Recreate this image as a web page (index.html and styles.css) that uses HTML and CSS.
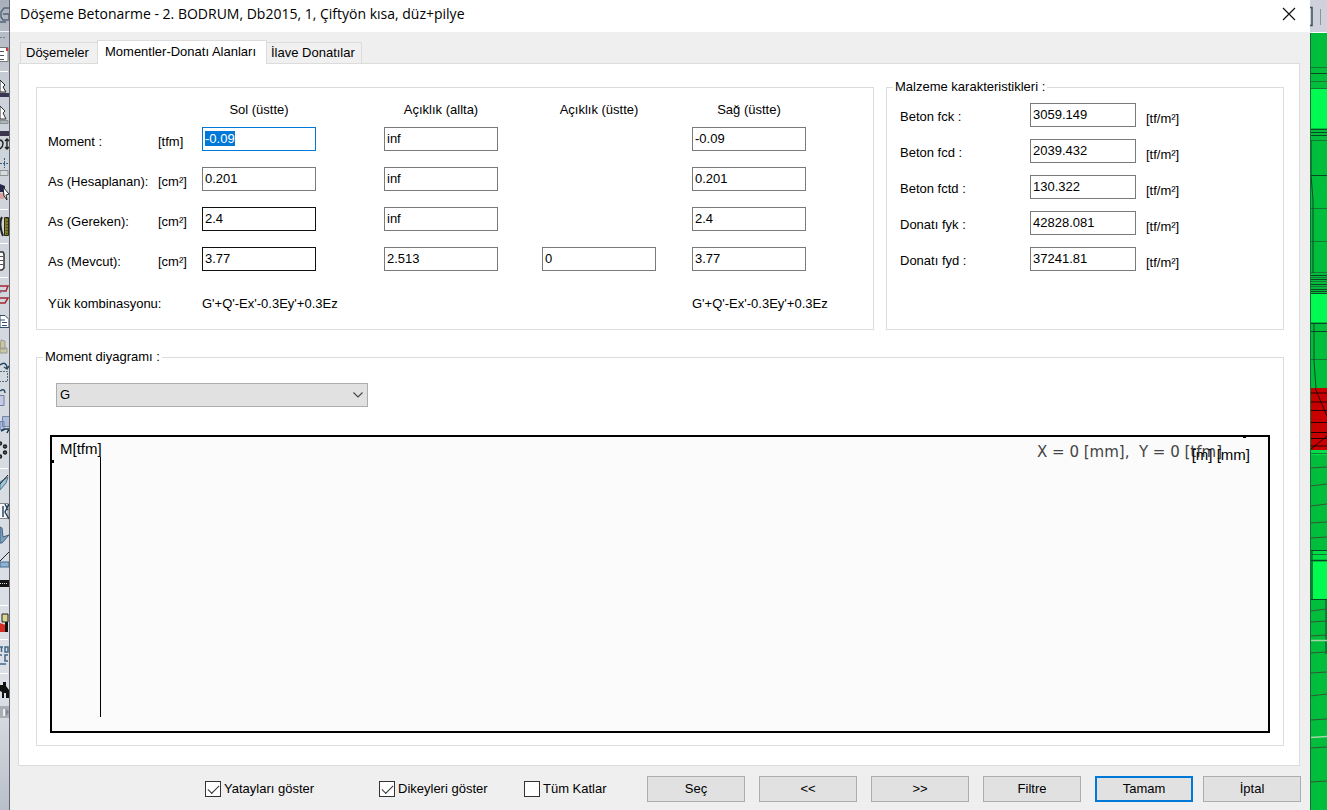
FILE: index.html
```html
<!DOCTYPE html>
<html lang="tr">
<head>
<meta charset="utf-8">
<title>Döşeme Betonarme</title>
<link rel="stylesheet" href="styles.css">
</head>
<body>
<div class="screen">
  <aside class="toolstrip" aria-hidden="true">
    <svg width="10" height="810" viewBox="0 0 10 810" fill="none">
      <defs><linearGradient id="steel" x2="0" y2="1"><stop offset="0" stop-color="#a9b0bb"/><stop offset=".12" stop-color="#cdd2da"/><stop offset=".85" stop-color="#dde1e7"/><stop offset="1" stop-color="#b9bfc9"/></linearGradient></defs>
      <path fill="url(#steel)" d="M0 0h10v810H0z"/>
      <path stroke="#53647a" stroke-width="1.4" d="M9 8H4L1 12v5l2 3h6M3 14h6v5M0 22h6"/>
      <path stroke="#f1f3f6" d="M0 31.500h9"/><path stroke="#777f8d" stroke-dasharray="2 1" d="M0 37.500h6"/>
      <path fill="#fff" stroke="#777" d="M-1 47.500h9v14h-9z"/><path stroke="#555" d="M0 51.500h4M0 55.500h4M0 59.500h4"/><path fill="#d33" d="M6 48h2v3H6z"/>
      <path stroke="#fff" d="M0 71.500h8"/>
      <path fill="#fff" stroke="#222" d="M0 80l5 5-2 2 3 5H0z"/><path fill="#3a3752" d="M0 93h9v4H0z"/>
      <path fill="#fff" stroke="#333" d="M0 106l5 5-2 2 3 6H0z"/><path fill="#adb5b6" stroke="#879193" d="M0 120.500h8v3H0z"/>
      <path fill="#3b364e" d="M0 131h9v5H0z"/><path stroke="#202020" stroke-width="1.400" d="M0 149c4-3 4-8 0-9M7 139v10M5 141l2-2 2 2M5 147l2 2 2-2"/>
      <path stroke="#345c78" stroke-dasharray="2 1" d="M0 163.500h9M4.500 158v10"/><path fill="#d6dcdc" stroke="#8a9295" d="M0 170.500h8v5H0z"/>
      <path fill="#28274d" d="M0 184l5 2v6H0z"/><path fill="#d8a3a0" d="M0 193h4v6H0z"/><path fill="#fff" stroke="#222" d="M3 187l6 7-3 1 1 5-3-4z"/>
      <path stroke="#fff" d="M0 209.500h8"/>
      <path stroke="#222" stroke-width="2" d="M2 217c-3 5-1 14 1 19"/><path fill="#847e20" stroke="#292920" d="M4.500 217.500h4v18h-4z"/><path stroke="#222" stroke-dasharray="1 2" d="M7 218v17"/>
      <path stroke="#fff" d="M0 243.500h8"/><path fill="#fff" stroke="#333" stroke-width="1.500" d="M0 252h3l1 2v14l-2 2H0"/><path stroke="#555" d="M0 256.500h3M0 260.500h3M0 264.500h3"/>
      <path stroke="#fff" d="M0 277.500h8"/><path stroke="#a72934" stroke-width="1.500" d="M0 286h8l-2 5H0M0 298h8l-3 5H0"/><path stroke="#6e91ad" d="M0 293l3-2"/>
      <path fill="#fff" stroke="#34506b" d="M0 315.500h5l4 4v8H0z"/><path stroke="#34506b" d="M0 320h5M2 322.500h5M2 325.500h5"/>
      <path fill="#cbc8a0" stroke="#999a91" d="M1 340l4 1v8H0zM0 348h7v5H0z"/>
      <path stroke="#244963" stroke-width="1.400" d="M0 365c5-4 7 0 7 3M4 367l3 2 2-3"/><path stroke="#516b81" stroke-dasharray="2 1" d="M0 371.500h7.500v10H0"/>
      <path stroke="#244963" stroke-width="1.400" d="M0 391c4-3 5 0 5 2"/><path fill="#c3cbe2" stroke="#7080a4" d="M-1 395.500h5v10h-5z"/>
      <path fill="#aebedb" stroke="#7285ab" d="M2.500 416.500h7v10h-7zM0 421.500h4v8H0z"/><path stroke="#18394c" stroke-width="1.500" d="M1 431l4-2h4l-2 4"/>
      <path fill="#777" stroke="#222" stroke-width="1.500" d="M5 445a1.500 1.500 0 110 3 1.500 1.500 0 010-3zM5 451a1.500 1.500 0 110 3 1.500 1.500 0 010-3zM0 442a1.500 1.500 0 010 3M0 455a1.500 1.500 0 010 3"/>
      <path stroke="#fff" d="M0 468.500h8"/><path fill="#9fc4d7" stroke="#4a7890" d="M0 482l8-5-2 6-6 7z"/><path stroke="#222" d="M0 484l8-9"/>
      <path fill="#f5f7f9" stroke="#888" d="M-1 503.500h9v15h-9z"/><path stroke="#223e58" stroke-width="1.400" d="M5 504l3 6M9 504l-4 8 4 7M3 506v11"/>
      <path fill="#7ca1bd" stroke="#41637e" d="M0 527l2 1 1 9 6-2-7 8H0z"/>
      <path fill="#91b2d1" stroke="#456c91" d="M0 562h9v5H0z"/><path stroke="#222" d="M0 561l9-9"/>
      <path fill="#151515" d="M0 580h9v7H0z"/><path stroke="#ddd" stroke-dasharray="1 1" d="M0 583.500h8"/>
      <path stroke="#fff" d="M0 605.500h8"/><path fill="#d9d58e" stroke="#222" d="M2 614h6v8H2z"/><path fill="#d52d24" d="M0 623l6 2v7H0z"/><path fill="#111" d="M5 622h3v10H5z"/>
      <path stroke="#fff" d="M0 639.500h8"/><path stroke="#42688b" stroke-width="1.500" d="M0 647h3M1.500 647v5M5 647h3v5H5zM0 655h2M8 655H5v6h3M0 664h6"/>
      <path stroke="#fff" d="M0 673.500h8"/><path fill="#111" d="M3 682h3v4l3 4v8H6v-5H4v5H2v-6l-2-1v-6h3z"/>
      <path fill="#a9aeb5" d="M0 706h9v12H0z"/><path fill="#eee" d="M3 709h2v7H3z"/><path fill="#858991" d="M6 709l3 3-3 4z"/>
      <path stroke="#62656c" d="M9.500 0v810"/>
    </svg>
  </aside>

  <main class="dialog">
    <header class="titlebar">
      <h1 class="title">Döşeme Betonarme - 2. BODRUM, Db2015, 1, Çiftyön kısa, düz+pilye</h1>
      <button class="close" aria-label="Kapat"><svg width="14" height="14" viewBox="0 0 14 14"><path d="M1 1l12 12M13 1L1 13" stroke="#111" stroke-width="1.200"/></svg></button>
    </header>

    <nav class="tabs" role="tablist">
      <button class="tab tab-slabs" role="tab">Döşemeler</button>
      <button class="tab tab-active" role="tab" aria-selected="true">Momentler-Donatı Alanları</button>
      <button class="tab tab-extra" role="tab">İlave Donatılar</button>
    </nav>

    <section class="panel">
      <div class="top-row">
        <div class="group moments">
          <span class="head sol">Sol (üstte)</span>
          <span class="head alt">Açıklık (allta)</span>
          <span class="head ust">Açıklık (üstte)</span>
          <span class="head sag">Sağ (üstte)</span>

          <label class="label" for="m1">Moment :</label><span class="unit">[tfm]</span>
          <input class="field sol" id="m1" value="-0.09">
          <input class="field alt" aria-label="Moment açıklık (allta)" value="inf">
          <input class="field sag" aria-label="Moment sağ (üstte)" value="-0.09">

          <label class="label" for="h1">As (Hesaplanan):</label><span class="unit">[cm²]</span>
          <input class="field sol" id="h1" value="0.201">
          <input class="field alt" aria-label="Hesaplanan açıklık (allta)" value="inf">
          <input class="field sag" aria-label="Hesaplanan sağ (üstte)" value="0.201">

          <label class="label" for="g1">As (Gereken):</label><span class="unit">[cm²]</span>
          <input class="field sol strong" id="g1" value="2.4">
          <input class="field alt" aria-label="Gereken açıklık (allta)" value="inf">
          <input class="field sag" aria-label="Gereken sağ (üstte)" value="2.4">

          <label class="label" for="v1">As (Mevcut):</label><span class="unit">[cm²]</span>
          <input class="field sol strong" id="v1" value="3.77">
          <input class="field alt" aria-label="Mevcut açıklık (allta)" value="2.513">
          <input class="field ust" aria-label="Mevcut açıklık (üstte)" value="0">
          <input class="field sag" aria-label="Mevcut sağ (üstte)" value="3.77">

          <span class="label combo-label">Yük kombinasyonu:</span>
          <span class="combo sol">G'+Q'-Ex'-0.3Ey'+0.3Ez</span>
          <span class="combo sag">G'+Q'-Ex'-0.3Ey'+0.3Ez</span>
        </div>

        <fieldset class="group material">
          <legend class="legend">Malzeme karakteristikleri :</legend>
          <div class="material-grid">
            <label class="mlabel" for="fck">Beton fck :</label><input class="field wide" id="fck" value="3059.149"><span class="munit">[tf/m²]</span>
            <label class="mlabel" for="fcd">Beton fcd :</label><input class="field wide" id="fcd" value="2039.432"><span class="munit">[tf/m²]</span>
            <label class="mlabel" for="fctd">Beton fctd :</label><input class="field wide" id="fctd" value="130.322"><span class="munit">[tf/m²]</span>
            <label class="mlabel" for="fyk">Donatı fyk :</label><input class="field wide" id="fyk" value="42828.081"><span class="munit">[tf/m²]</span>
            <label class="mlabel" for="fyd">Donatı fyd :</label><input class="field wide" id="fyd" value="37241.81"><span class="munit">[tf/m²]</span>
          </div>
        </fieldset>
      </div>

      <fieldset class="group diagram-group">
        <legend class="legend">Moment diyagramı :</legend>
        <div class="diagram-body">
          <div class="picker">
            <select class="select" aria-label="Yükleme"><option>G</option></select>
            <svg class="chevron" width="10" height="6" viewBox="0 0 10 6" fill="none"><path d="M.5 .5L5 5 9.500 .5" stroke="#444" stroke-width="1.100"/></svg>
          </div>
          <div class="plot">
            <span class="axis-y">M[tfm]</span>
            <span class="axis-line"></span>
            <span class="tick-left"></span>
            <span class="tick-top"></span>
            <span class="cursor-pos">X = 0 [mm],&nbsp; Y = 0 [tfm]</span>
            <span class="axis-x">[m] [mm]</span>
          </div>
        </div>
      </fieldset>
    </section>

    <footer class="footer">
      <label class="check horizontals"><input class="box" type="checkbox" checked>Yatayları göster</label>
      <label class="check verticals"><input class="box" type="checkbox" checked>Dikeyleri göster</label>
      <label class="check floors"><input class="box" type="checkbox">Tüm Katlar</label>
      <div class="buttons">
        <button class="btn">Seç</button>
        <button class="btn">&lt;&lt;</button>
        <button class="btn">&gt;&gt;</button>
        <button class="btn">Filtre</button>
        <div class="confirm">
          <button class="btn btn-default">Tamam</button>
          <button class="btn">İptal</button>
        </div>
      </div>
    </footer>
  </main>

  <aside class="model" aria-hidden="true">
    <svg width="17" height="810" viewBox="0 0 17 810" fill="none">
      <path fill="#00bd3b" d="M0 0h17v810H0z"/>
      <path fill="#cfd2dc" d="M0 0h17v33H0z"/><path stroke="#38515d" stroke-width="1.500" d="M0 7.500h2v18H0"/><path stroke="#8f929b" d="M10.500 9v16"/><path stroke="#fff" d="M0 32.500h17"/>
      <path fill="#00fa50" d="M0 89h17v39H0zM0 294h17v28H0zM3 562h14v37H3z"/>
      <path fill="#00df47" d="M0 450h17v5H0zM2 551h15v8H2z"/>
      <path stroke="#157833" d="M0 67.500h17M0 81.500h17M0 88.500h17M0 140.500h17M0 208.500h17M0 241.500h17M0 272.500h17M0 277.500h17M0 281.500h17M0 286.500h17M0 359.500h17M0 453.500h17M2 554.500h15"/>
      <path stroke="#0b4822" d="M0 73.500h17M0 129.500h17M0 132.500h17M0 135.500h17M0 175.500h17M0 275.500h17M0 279.500h17M0 284.500h17M0 289.500h17M0 291.500h17M0 293.500h17M0 323.500h17M0 331.500h17M1 140v35l2 25v73M4 323v38l2 27M0 550.500h17M2 551v48M0 560.500h17M0 599.500h17M16 599v55"/>
      <path fill="#c90000" d="M0 388h17v62H0z"/>
      <path stroke="#260000" d="M0 393h17M0 402h17M0 410.500h17M0 422.500h17M0 432.500h17M0 438.500h17M0 446h17M5 388l12 28M0 450l17-14"/>
      <path stroke="#365638" d="M0 468l17-1M0 486l17-2M0 506l17-2M0 523l17-1M0 538l17-1M0 611l17-2M0 622l17-1M0 636l17-1M0 653l17-1M0 673l17-1M0 696l17-2M0 720l17-1M0 748l17-1M0 782l17-1"/>
      <path stroke="#a6d3a8" stroke-width="1.500" d="M0 640.500h17M0 737.500l17-1"/>
      <path stroke="#196b30" d="M.5 33v777"/>
    </svg>
  </aside>
</div>
<script src="main.js"></script>
</body>
</html>
```
FILE: styles.css
```css
* { box-sizing: border-box; }
body { margin: 0; font: 13px/16px "Liberation Sans", Arial, sans-serif; color: #000; }
button, input, select { font: inherit; color: inherit; margin: 0; }

.screen { display: flex; min-height: 100vh; background: #efefef; }
.toolstrip { flex: 0 0 10px; background: #c8ccd4; }
.model { flex: 0 0 17px; background: #00bd3b; }
.toolstrip svg, .model svg { display: block; }

.dialog { flex: 1; min-width: 0; display: flex; flex-direction: column; background: #efefef; }
.titlebar { display: flex; justify-content: space-between; align-items: center; height: 32px; padding: 0 14px 4px 10px; background: #fff; }
.title { margin: 0; font: 14px/20px "Open Sans", "Noto Sans", sans-serif; }
.close { display: flex; padding: 0; border: 0; background: none; }

.tabs { display: flex; align-items: flex-end; height: 31px; padding-left: 10px; }
.tab { height: 21px; padding: 0 4px; border: 1px solid #dcdcdc; border-bottom: 0; background: #f0f0f0; text-align: left; white-space: nowrap; }
.tab-slabs { min-width: 77px; padding-left: 5px; border-right: 0; }
.tab-extra { min-width: 95px; border-left: 0; }
.tab-active { position: relative; z-index: 1; min-width: 170px; height: 24px; margin-bottom: -1px; padding: 0 7px 2px; background: #fff; }

.panel { flex: 1; display: flex; flex-direction: column; gap: 19px; margin: 0 10px 0 8px; padding: 15px 15px 19px 17px; border: 1px solid #dcdcdc; background: #fff; }
.top-row { display: grid; grid-template-columns: 838fr 398fr; gap: 12px; min-height: 251px; }
.group { min-width: 0; margin: 0; padding: 0; border: 1px solid #dcdcdc; }
.legend { margin-left: 6px; padding: 0 2px; }

.moments { display: grid; grid-template-columns: 110px 44px 182fr 158fr 150fr 114px; grid-template-rows: 26px repeat(4, 40px) 30px; margin-top: 8px; padding: 13px 67px 0 11px; }
.sol { grid-column: 3; }
.alt { grid-column: 4; }
.ust { grid-column: 5; }
.sag { grid-column: 6; }
.head { width: 114px; padding-top: 1px; text-align: center; }
.label { grid-column: 1; padding-top: 7px; white-space: nowrap; }
.unit { padding-top: 7px; }
.combo-label, .combo { padding-top: 9px; white-space: nowrap; }

.field { width: 114px; height: 24px; padding: 0 2px 2px; border: 1px solid #7a7a7a; border-radius: 0; background: #fff; outline: 0; }
.field:focus { border-color: #0078d7; }
.field::selection { background: #0078d7; color: #fff; }
.strong { border-color: #111; }
.wide { width: 106px; }

.material-grid { display: grid; grid-template-columns: 130px 116px 1fr; grid-auto-rows: 36px; padding: 8px 0 0 13px; }
.mlabel { padding-top: 6px; }
.munit { padding-top: 8px; }

.diagram-group { flex: 1; display: flex; flex-direction: column; }
.diagram-body { flex: 1; display: flex; flex-direction: column; gap: 28px; padding: 18px 13px 12px; }
.picker { position: relative; width: 312px; margin-left: 6px; }
.select { display: block; width: 100%; height: 24px; padding: 0 3px; border: 1px solid #adadad; border-radius: 0; background: #e1e1e1; appearance: none; }
.chevron { position: absolute; right: 5px; top: 9px; pointer-events: none; }

.plot { position: relative; flex: 1; border: 2px solid #000; background: #fbfbfb; font-size: 15px; }
.axis-y { position: absolute; left: 8px; top: 4px; }
.axis-line { position: absolute; left: 48px; top: 20px; bottom: 14px; width: 1px; background: #000; }
.tick-left { position: absolute; left: 0; top: 23px; width: 2px; height: 3px; background: #000; }
.tick-top { position: absolute; right: 22px; top: 0; width: 3px; height: 1px; background: #000; }
.cursor-pos { position: absolute; right: 46px; top: 7px; font: 15px/16px "DejaVu Sans", Verdana, sans-serif; color: #444; }
.axis-x { position: absolute; right: 18px; top: 10px; }

.footer { display: flex; justify-content: flex-end; align-items: center; padding: 10px 9px 8px 0; }
.check { display: flex; align-items: center; gap: 3px; }
.horizontals { width: 174px; }
.verticals { width: 145px; }
.floors { width: 123px; }
.box { flex: none; width: 16px; height: 16px; border: 1px solid #333; background: #fff; appearance: none; }
.box:checked::after { content: ""; display: block; width: 10px; height: 5px; margin: 3px 2px; border: solid #333; border-width: 0 0 1px 1px; transform: rotate(-45deg); }
.buttons { display: flex; gap: 14px; }
.confirm { display: flex; gap: 10px; }
.btn { width: 98px; height: 26px; padding: 0; border: 1px solid #adadad; background: #e1e1e1; }
.btn-default { border: 2px solid #0078d7; }
```
FILE: main.js
```js
const first = document.getElementById("m1");
first.focus();
first.select();
```
